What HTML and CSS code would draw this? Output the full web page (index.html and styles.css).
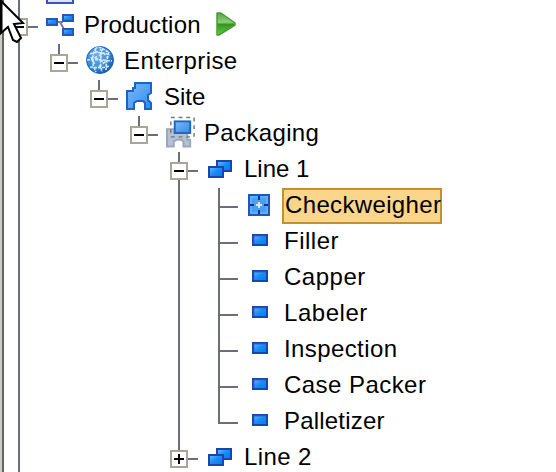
FILE: index.html
```
<!DOCTYPE html>
<html lang="en">
<head>
<meta charset="utf-8">
<title>Production tree</title>
<link rel="stylesheet" href="styles.css">
</head>
<body>
<svg class="defs" width="0" height="0" aria-hidden="true">
  <defs>
    <linearGradient id="blue" x1="0" y1="0" x2="1" y2="1"><stop offset="0" stop-color="#72b8ff"/><stop offset=".5" stop-color="#168cf5"/><stop offset="1" stop-color="#067be8"/></linearGradient>
    <linearGradient id="site" x1="0" y1="0" x2="1" y2="1"><stop offset="0" stop-color="#80b9f8"/><stop offset="1" stop-color="#2c8cec"/></linearGradient>
    <linearGradient id="green" x1="0" y1="0" x2="0" y2="1"><stop offset="0" stop-color="#4fa63c"/><stop offset=".42" stop-color="#8fce7c"/><stop offset=".52" stop-color="#35971f"/><stop offset="1" stop-color="#63ce3c"/></linearGradient>
    <radialGradient id="globe" cx=".4" cy=".35" r=".65"><stop offset="0" stop-color="#69b5f1"/><stop offset=".65" stop-color="#348ddd"/><stop offset="1" stop-color="#195bb8"/></radialGradient>
    <symbol id="tag" viewBox="0 0 16 12"><rect x="1" y="1" width="14" height="10" fill="url(#blue)" stroke="#1747ac" stroke-width="2"/><path d="M2 10V2h12" fill="none" stroke="#2768cb"/></symbol>
    <symbol id="line" viewBox="0 0 24 18"><rect x="9" y="1" width="14" height="10" fill="url(#blue)" stroke="#1747ac" stroke-width="2"/><rect x="1" y="7" width="14" height="10" fill="url(#blue)" stroke="#1747ac" stroke-width="2"/></symbol>
  </defs>
</svg>
<main class="tree">
  <div class="gutter"></div>
  <div class="previous"><span></span></div>
  <div class="row d0"><i class="box"></i><i class="dash"></i>
    <svg class="icon" viewBox="0 0 30 36"><path d="M12 15h4l4-5M14 15l5 9" fill="none" stroke="#8174b8" stroke-width="2"/><rect x="1" y="12" width="10" height="6" fill="url(#blue)" stroke="#2855b8" stroke-width="2"/><rect x="17" y="8" width="10" height="6" fill="url(#blue)" stroke="#2855b8" stroke-width="2"/><rect x="17" y="22" width="10" height="6" fill="url(#blue)" stroke="#2855b8" stroke-width="2"/></svg>
    <span class="label production">Production</span>
    <svg class="play" viewBox="0 0 22 26"><path d="M2 2l4 0 14 10v2L4 24H2z" fill="url(#green)" stroke="#4b9a3a" stroke-width="1.5" stroke-linejoin="round"/></svg>
  </div>
  <div class="row d1"><i class="stem"></i><i class="box"></i><i class="dash"></i>
    <svg class="icon" viewBox="0 0 30 36"><circle cx="14" cy="17" r="13.5" fill="url(#globe)" stroke="#2465be"/><path d="M9 6c4-4 8 0 13 3M4 11c6-3 13-1 20 1M1 17c8-1 16 0 25 1M4 24c7 1 14 1 20-1M10 5C5 13 6 22 10 29M17 5c-3 8-3 17-1 24M23 9c-2 6-3 12-3 18" fill="none" stroke="#d9e9f3" stroke-width="1.6" stroke-dasharray="3 1"/><path d="M9 8l8 3-9 4 11 4-8 6M5 14l4 8M14 6l8 9" fill="none" stroke="#dfe6e4" stroke-width="1.6" stroke-dasharray="3 2"/></svg>
    <span class="label enterprise">Enterprise</span></div>
  <div class="row d2"><i class="stem"></i><i class="box"></i><i class="dash"></i>
    <svg class="icon" viewBox="0 0 30 36"><path d="M9 4h16v10l-3 2v5l3 3v6h-6v-6l-2-2h-6l-3 2v6H1V12h6V9h2z" fill="url(#site)" stroke="#1c62cb" stroke-width="2"/></svg>
    <span class="label site">Site</span></div>
  <div class="row d3"><i class="stem"></i><i class="box"></i><i class="dash"></i>
    <svg class="icon" viewBox="0 0 31 36"><path d="M1 14h8v4h13v7h3v7h-7v-5l-2-2h-5l-3 2v5H1z" fill="#b3c2d5" stroke="#9aa8bc" stroke-width="2"/><path d="M5 2h24v20H5z" fill="none" stroke="#777" stroke-width="1.5" stroke-dasharray="4 4"/><rect x="9" y="6" width="16" height="12" fill="url(#site)" stroke="#2365c2" stroke-width="2"/></svg>
    <span class="label packaging">Packaging</span></div>
  <div class="row d4"><i class="stem"></i><i class="box"></i><i class="dash"></i>
    <svg class="line-icon"><use href="#line"/></svg><span class="label line1">Line 1</span></div>
  <div class="children">
    <div class="row leaf"><i class="branch"></i><svg class="check" viewBox="0 0 22 22"><rect x="1" y="1" width="20" height="20" fill="#63adf5" stroke="#1f58bd" stroke-width="2"/><rect x="4" y="4" width="14" height="14" fill="#4a9ff2"/><path d="M11 2v4M11 16v4M2 11h4M16 11h4" stroke="#08378f" stroke-width="2"/><path d="M11 8v6M8 11h6" stroke="#e2e4e8" stroke-width="2"/></svg><span class="label checkweigher">Checkweigher</span></div>
    <div class="row leaf"><i class="branch"></i><svg class="tag"><use href="#tag"/></svg><span class="label filler">Filler</span></div>
    <div class="row leaf"><i class="branch"></i><svg class="tag"><use href="#tag"/></svg><span class="label capper">Capper</span></div>
    <div class="row leaf"><i class="branch"></i><svg class="tag"><use href="#tag"/></svg><span class="label labeler">Labeler</span></div>
    <div class="row leaf"><i class="branch"></i><svg class="tag"><use href="#tag"/></svg><span class="label inspection">Inspection</span></div>
    <div class="row leaf"><i class="branch"></i><svg class="tag"><use href="#tag"/></svg><span class="label packer">Case Packer</span></div>
    <div class="row leaf"><i class="branch"></i><svg class="tag"><use href="#tag"/></svg><span class="label palletizer">Palletizer</span></div>
  </div>
  <div class="row d4"><i class="box plus"></i><i class="dash"></i>
    <svg class="line-icon"><use href="#line"/></svg><span class="label line2">Line 2</span></div>
</main>
<svg class="cursor" viewBox="0 0 28 44"><path d="M1 1l22 22-9 1 7 14-4 4-4-2-5-13-7 6z" fill="#fff" stroke="#000" stroke-width="2"/><path d="M1 0v33" stroke="#000" stroke-width="3"/></svg>
</body>
</html>
```
FILE: styles.css
```
* { box-sizing: border-box; }
body { margin: 0; background: #fff; color: #000; font: 24px/36px "Liberation Sans", Arial, sans-serif; overflow: hidden; }
.defs { position: absolute; }
.tree { position: relative; height: 472px; overflow: hidden; }
.gutter { position: absolute; inset: 0 auto 0 0; width: 20px; border-left: 2px solid #cccbc5; border-right: 2px solid #697176; }
.gutter::before { content: ""; display: block; width: 2px; height: 100%; background: #66645a; }
.previous { height: 7px; padding-left: 46px; }
.previous span { display: block; width: 28px; height: 4px; background: #e0e2fc; border: 2px solid #3653c2; border-top: 0; }
.row { position: relative; display: flex; height: 36px; align-items: flex-start; }
.d0 { padding-left: 10px; }
.d1 { padding-left: 50px; }
.d2 { padding-left: 90px; }
.d3 { padding-left: 130px; }
.d4 { padding-left: 170px; }
.box { position: relative; flex: none; width: 18px; height: 18px; margin-top: 11px; border: 2px solid #aaa594; background: #fff; }
.box::before { content: ""; position: absolute; left: 2px; top: 6px; width: 10px; height: 2px; background: #000; }
.plus::after { content: ""; position: absolute; left: 6px; top: 2px; width: 2px; height: 10px; background: #000; }
.dash { flex: none; width: 10px; height: 2px; margin-top: 19px; background: #697176; }
.stem { width: 2px; height: 10px; margin: 1px -10px 0 8px; background: #697176; }
.icon { flex: none; width: 30px; height: 36px; margin-left: 8px; }
.label { white-space: pre; margin-left: 8px; height: 36px; }
.production { letter-spacing: .2px; }
.enterprise { letter-spacing: .42px; }
.packaging { letter-spacing: .35px; }
.play { width: 22px; height: 26px; margin: 4px 0 0 14px; }
.line-icon { flex: none; width: 24px; height: 18px; margin: 9px 4px 0 10px; }
.children { position: relative; margin-left: 218px; }
.children::before { content: ""; position: absolute; left: -40px; top: -7px; width: 2px; height: 270px; background: #697176; }
.leaf::before { content: ""; width: 2px; height: 36px; background: #697176; }
.leaf:first-child::before { height: 35px; margin-top: 1px; }
.leaf:last-child::before { height: 21px; }
.branch { flex: none; width: 18px; height: 2px; margin-top: 19px; background: #697176; }
.tag { flex: none; width: 16px; height: 12px; margin: 11px 8px 0 14px; }
.check { flex: none; width: 22px; height: 22px; margin: 7px 6px 0 10px; }
.leaf .label { margin-left: 8px; }
.leaf .checkweigher { width: 160px; height: 36px; margin: 1px 0 0 6px; padding-left: 1px; line-height: 30px; letter-spacing: .35px; background: #fad58a; border: 2px solid #c0912f; }
.filler { letter-spacing: .5px; }
.capper { letter-spacing: .5px; }
.labeler { letter-spacing: .55px; }
.inspection { letter-spacing: .4px; }
.packer { letter-spacing: .45px; }
.palletizer { letter-spacing: .2px; }
.line2 { letter-spacing: .4px; }
.cursor { position: absolute; left: 0; top: 0; width: 28px; height: 44px; }
```
